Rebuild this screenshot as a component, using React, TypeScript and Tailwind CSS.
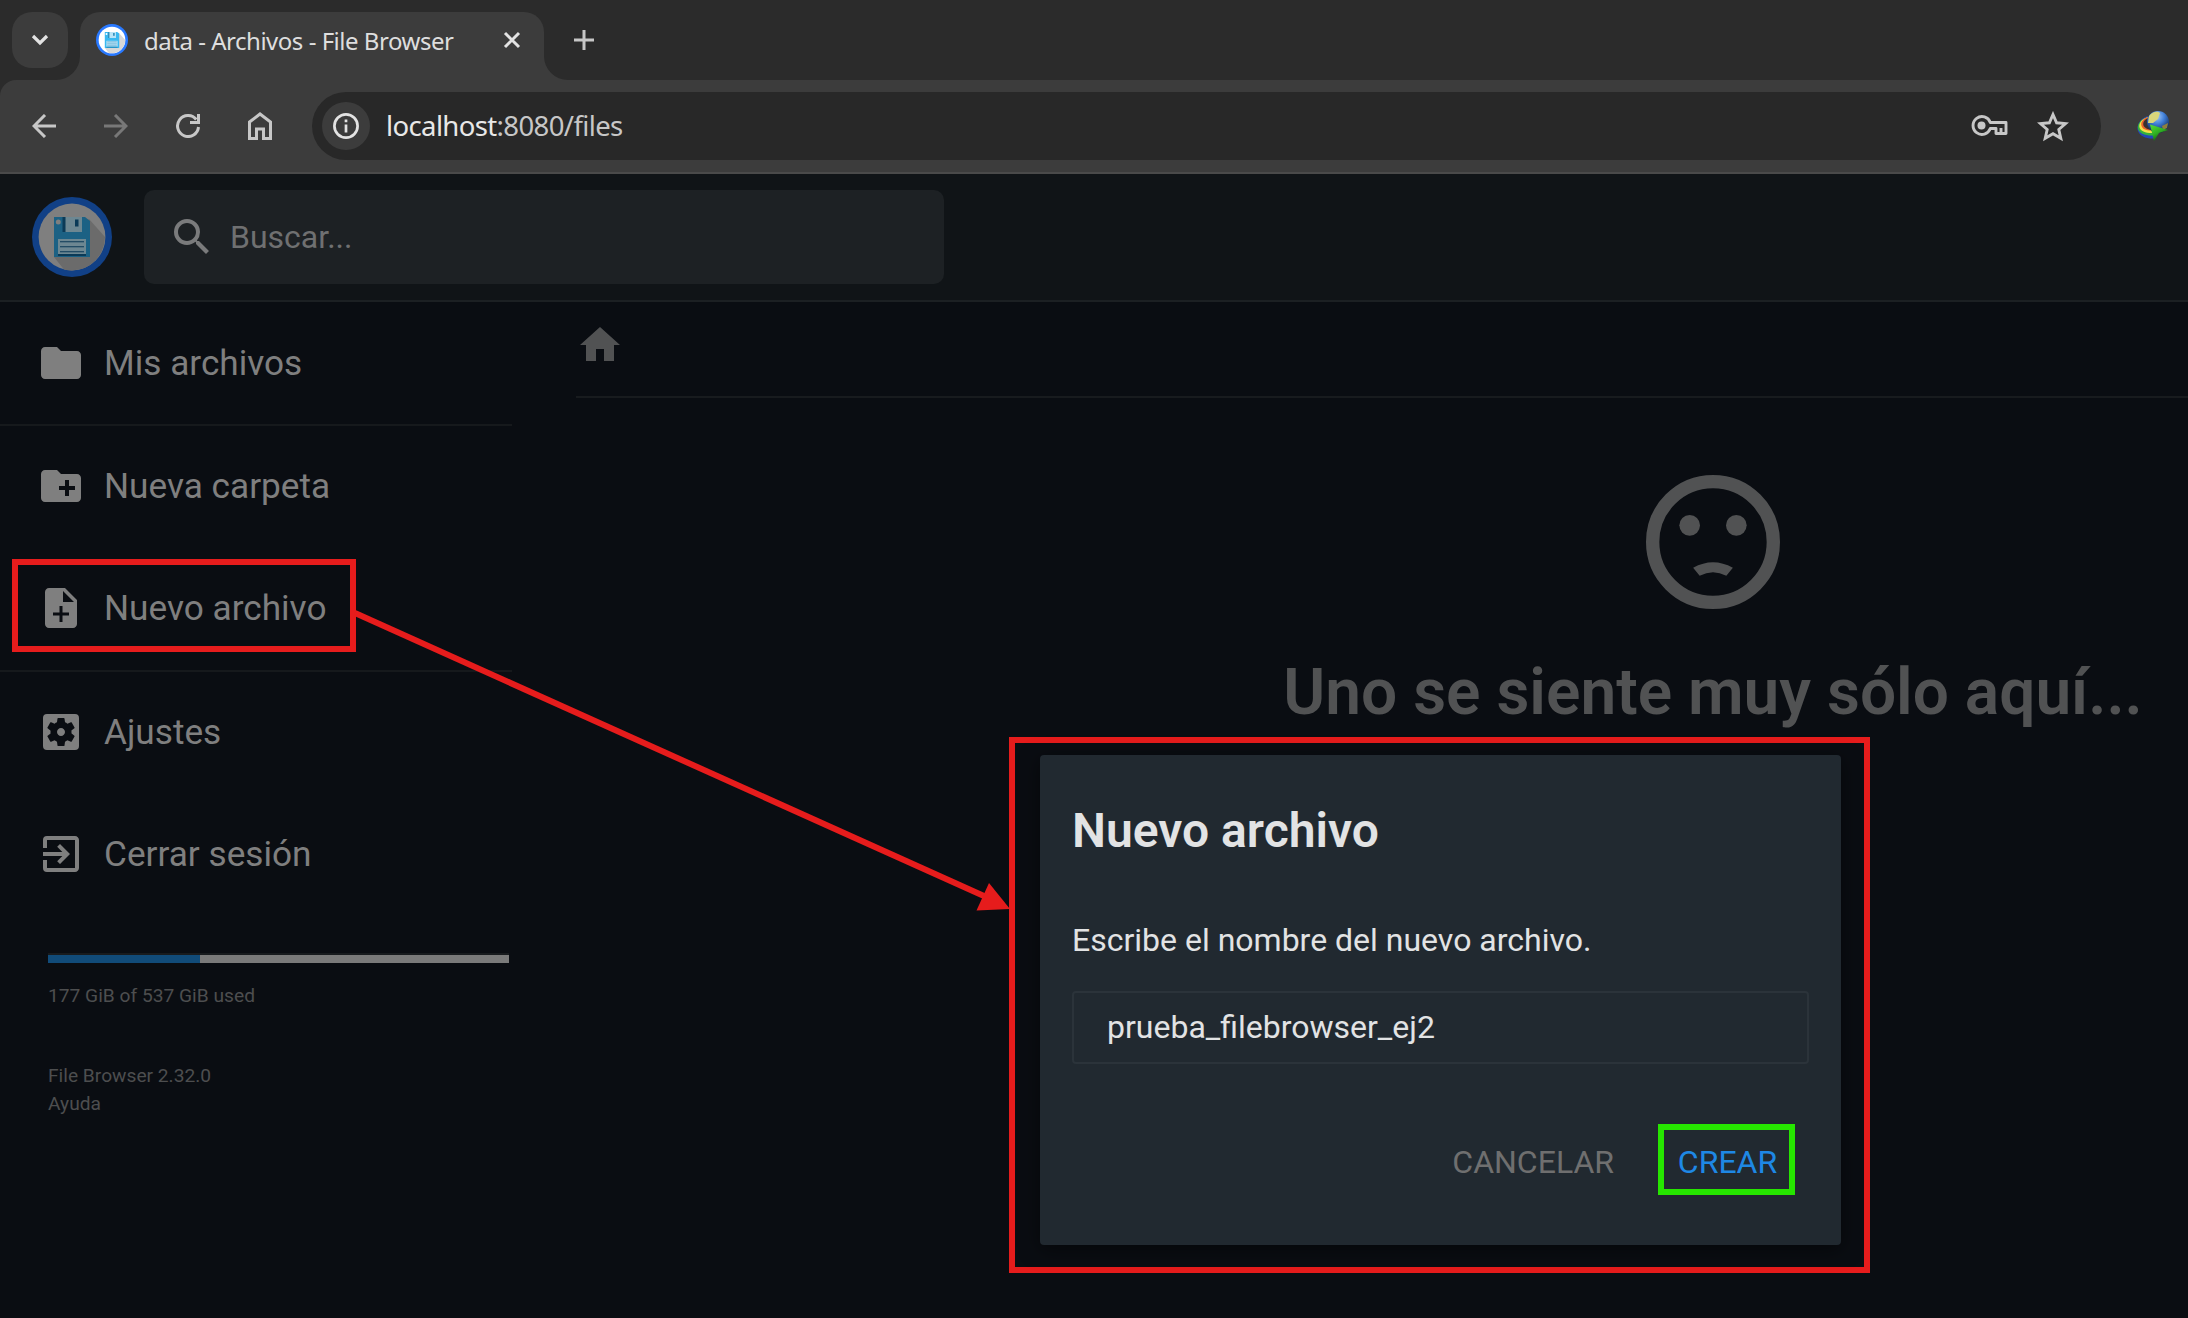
import React from "react";
import {
  MdFolder,
  MdCreateNewFolder,
  MdSettingsApplications,
  MdExitToApp,
  MdSearch,
  MdHome,
} from "react-icons/md";

function Floppy({ size, dim }: { size: number; dim?: boolean }) {
  const ring = dim ? "#114086" : "#2979ff";
  const face = dim ? "#7f7f7f" : "#ffffff";
  const shade = dim ? "#6b6b6b" : "#d8d8d8";
  const body = dim ? "#1c6184" : "#39b8f0";
  const label = dim ? "#6d8792" : "#b9e4f7";
  const dark = dim ? "#0b3a57" : "#1a7fb0";
  return (
    <svg width={size} height={size} viewBox="0 0 80 80" className="shrink-0">
      <circle cx="40" cy="40" r="40" fill={ring} />
      <circle cx="40" cy="40" r="33.4" fill={face} />
      <path d="M57 22 L73 40 A33.4 33.4 0 0 1 32 72.5 L22 60 Z" fill={shade} />
      <path d="M22 20H53L58 24V60H22Z" fill={body} />
      <rect x="31" y="20" width="19" height="15" fill={label} />
      <rect x="30.500" y="20" width="3" height="15" fill={dark} />
      <rect x="43" y="22.500" width="3.500" height="7" fill={dark} />
      <circle cx="26.300" cy="25" r="2.500" fill={face} />
      <rect x="26" y="42" width="28" height="15" fill={label} />
      <path d="M28 44.700H52M28 49.700H52M28 54.700H52" stroke={dark} strokeWidth="1.100" />
      <rect x="26" y="57" width="28" height="2" fill={dark} />
    </svg>
  );
}

function NavItem({ icon, label, className }: { icon: React.ReactNode; label: string; className?: string }) {
  return (
    <div className={`flex h-[122px] items-center pl-[37px] text-[35.2px] text-[#7f7f7f] ${className ?? ""}`}>
      <span className="mr-[19px] text-5xl">{icon}</span>
      <span className="pt-0.5 leading-none">{label}</span>
    </div>
  );
}

function BrowserChrome() {
  return (
    <div className="h-[174px] shrink-0 font-['Noto_Sans',sans-serif]">
      <div className="flex h-20 bg-[#2b2b2b] pt-3 pl-3">
        <div className="flex size-14 items-center justify-center rounded-[20px] bg-[#3c3c3c]">
          <svg width="20" height="16" viewBox="0 0 20 16" fill="none" stroke="#e3e3e3" strokeWidth="3.200">
            <path d="M3 4l7 7 7-7" />
          </svg>
        </div>
        <div className="relative ml-3 flex h-[68px] w-[464px] items-center rounded-t-[20px] bg-[#3c3c3c] pb-3 pl-4">
          <svg className="absolute bottom-0 -left-6" width="24" height="24" viewBox="0 0 24 24" fill="#3c3c3c">
            <path d="M24 0V24H0A24 24 0 0 0 24 0Z" />
          </svg>
          <svg className="absolute -right-6 bottom-0" width="24" height="24" viewBox="0 0 24 24" fill="#3c3c3c">
            <path d="M0 0V24H24A24 24 0 0 1 0 0Z" />
          </svg>
          <Floppy size={32} />
          <span className="ml-4 w-[320px] shrink-0 pt-0.5 text-[24px] tracking-[-0.48px] whitespace-nowrap text-[#dedede]">
            data - Archivos - File Browser
          </span>
          <svg className="ml-[39px] shrink-0" width="18" height="18" viewBox="0 0 18 18" stroke="#e3e3e3" strokeWidth="3">
            <path d="M2 2l14 14M16 2L2 16" />
          </svg>
        </div>
        <svg className="mt-[18px] ml-[30px]" width="20" height="20" viewBox="0 0 20 20" stroke="#c7c7c7" strokeWidth="3">
          <path d="M10 0V20M0 10H20" />
        </svg>
      </div>
      <div className="bg-[#2b2b2b]">
        <div className="flex h-[94px] items-center rounded-tl-2xl border-b-2 border-[#4a4a4a] bg-[#3c3c3c]">
          <svg className="ml-8" width="24" height="24" viewBox="0 0 24 24" fill="none" stroke="#c7c7c7" strokeWidth="3">
            <path d="M24 12H2.500M13 1L2 12l11 11" />
          </svg>
          <svg className="ml-12" width="24" height="24" viewBox="0 0 24 24" fill="none" stroke="#787878" strokeWidth="3">
            <path d="M0 12H21.500M11 1l11 11-11 11" />
          </svg>
          <svg className="ml-12" width="24" height="24" viewBox="0 0 24 24" fill="none" stroke="#c7c7c7" strokeWidth="3">
            <path d="M22.500 13A10.500 10.500 0 1 1 20.300 5.500M22.500 0V8.500H14" />
          </svg>
          <svg className="ml-12" width="24" height="28" viewBox="0 0 24 28" fill="none" stroke="#c7c7c7" strokeWidth="3">
            <path d="M1.500 10L12 2l10.500 8V26.500H15.500V17H8.500v9.500H1.500Z" />
          </svg>
          <div className="ml-10 flex h-[68px] w-[1789px] items-center rounded-full bg-[#282828]">
            <div className="ml-2.5 flex size-12 items-center justify-center rounded-full bg-[#3c3c3c]">
              <svg width="26" height="26" viewBox="0 0 26 26" fill="none" stroke="#e3e3e3" strokeWidth="2.700">
                <circle cx="13" cy="13" r="11.600" />
                <path d="M13 11.500V19.500M13 6.500V9.200" />
              </svg>
            </div>
            <div className="ml-4 text-[27.5px] tracking-[-0.62px] text-[#c7c7c7]">
              <span className="text-[#e8e8e8]">localhost</span>:8080/files
            </div>
            <svg className="ml-auto" width="37" height="22" viewBox="0 0 37 22" fill="none" stroke="#c7c7c7" strokeWidth="2.900">
              <path d="M19.300 7.500A8.900 8.900 0 1 0 19.300 13.500H25V18.500H35V7.500Z" strokeLinejoin="round" />
              <path d="M30 18V13" />
              <circle cx="10.500" cy="10.500" r="4" fill="#c7c7c7" stroke="none" />
            </svg>
            <svg className="mr-8 ml-[29px]" width="32" height="31" viewBox="0 0 32 31" fill="none" stroke="#c7c7c7" strokeWidth="2.900">
              <path d="M16 3.500L19.600 11.800 28.600 12.600 21.800 18.500 23.800 27.300 16 22.700 8.200 27.300 10.200 18.500 3.400 12.600 12.400 11.800Z" />
            </svg>
          </div>
          <svg className="ml-9" width="33" height="31" viewBox="0 0 33 31">
            <defs>
              <radialGradient id="globe" cx="0.45" cy="0.25" r="0.75">
                <stop offset="0" stopColor="#a9cdf5" />
                <stop offset="0.45" stopColor="#3f7fd9" />
                <stop offset="1" stopColor="#0d1f4a" />
              </radialGradient>
              <linearGradient id="arrow" x1="0" y1="0" x2="0.600" y2="1">
                <stop offset="0" stopColor="#55e03a" />
                <stop offset="0.550" stopColor="#2fae22" />
                <stop offset="1" stopColor="#07450c" />
              </linearGradient>
            </defs>
            <path d="M11 5C3 7-1 15 1 20S9 28 17 27.500L17 18C12 18 9 13 11 5Z" fill="#2446b8" />
            <path d="M11 6C3 8 0 14 1 18S8 25 17 24.500L17 18C12 18 9 13 11 6Z" fill="#35b13c" />
            <path d="M11 6C4 8 1.500 13 2.500 16.500S9 22.500 17 22L17 18C12 18 9 13 11 6Z" fill="#f4e04a" />
            <path d="M11 6C5 8 3.500 12 4.500 15S9 20 17 19.500L17 17C12 17 9 13 11 6Z" fill="#e9652b" />
            <path d="M12 7C7 8 5.500 12 6.500 14.500S11 19 17 19L17 13Z" fill="#3a3030" />
            <circle cx="21" cy="11" r="11" fill="url(#globe)" />
            <path d="M12 5C16 0 21 0 23 2L21 8 16 12 11 12Z" fill="#d9d67a" />
            <path d="M25 15L31 12 30 17 26 19Z" fill="#8f7f3c" />
            <path d="M13 13.500L31 19 22 22 17 30Z" fill="url(#arrow)" />
          </svg>
        </div>
      </div>
    </div>
  );
}

function Sidebar() {
  return (
    <nav className="w-[512px] shrink-0">
      <div className="border-b-2 border-[#16191c]">
        <NavItem icon={<MdFolder />} label="Mis archivos" />
      </div>
      <div className="border-b-2 border-[#16191c]">
        <NavItem className="pb-0.5" icon={<MdCreateNewFolder />} label="Nueva carpeta" />
        <NavItem
          className="pb-0.5"
          icon={
            <svg width="48" height="48" viewBox="0 0 24 24" fill="currentColor">
              <path d="M14 2H6c-1.100 0-1.990.9-1.990 2L4 20c0 1.100.89 2 1.990 2H18c1.100 0 2-.9 2-2V8l-6-6zm2 13.700h-3.250V19h-1.500v-3.300H8v-1.400h3.250V11h1.500v3.300H16zM13 9V3.500L18.500 9H13z" />
            </svg>
          }
          label="Nuevo archivo"
        />
      </div>
      <div>
        <NavItem className="pb-0.5" icon={<MdSettingsApplications />} label="Ajustes" />
        <NavItem className="pb-0.5" icon={<MdExitToApp />} label="Cerrar sesión" />
      </div>
      <div className="mt-[37px] ml-12 w-[461px] border-t-2 border-[#181b1e]">
        <div className="h-2 bg-[#7a7a7a]">
          <div className="h-2 w-[152px] bg-[#114b79]" />
        </div>
      </div>
      <div className="ml-12 text-[19.2px] leading-7 text-[#4d4e4f]">
        <div className="mt-[19px]">177 GiB of 537 GiB used</div>
        <div className="mt-[52px]">File Browser 2.32.0</div>
        <div>Ayuda</div>
      </div>
    </nav>
  );
}

function Prompt() {
  return (
    <div className="absolute top-[737px] left-[1009px] h-[536px] w-[861px] border-[6px] border-[#e61c1c] pt-3 pl-[25px]">
      <div className="flex h-[490px] w-[801px] flex-col rounded bg-[#212930] px-8 text-[#e2e3e4] shadow-[0_4px_20px_rgba(0,0,0,0.5)]">
        <h2 className="mt-12 text-5xl leading-[56px] font-semibold">Nuevo archivo</h2>
        <p className="mt-[61px] text-[32px] leading-10">Escribe el nombre del nuevo archivo.</p>
        <div className="mt-[31px] flex h-[73px] items-center rounded border-2 border-[#2b333a] pb-0.5 pl-[33px] text-[32px] leading-none">
          prueba_filebrowser_ej2
        </div>
        <div className="mt-[60px] mr-[14px] flex items-center justify-end text-[32px] leading-none">
          <span className="mr-11 pt-1 text-[#6f6f6f]">CANCELAR</span>
          <span className="flex h-[71px] w-[137px] items-center justify-center border-[6px] border-[#26e600] pt-1 pl-0.5 text-[#1e88e5]">
            CREAR
          </span>
        </div>
      </div>
    </div>
  );
}

export default function App() {
  return (
    <div className="relative flex h-[1318px] w-[2188px] flex-col overflow-hidden bg-[#0a0d12] font-[Roboto,sans-serif]">
      <BrowserChrome />
      <header className="flex h-32 shrink-0 items-center border-b-2 border-[#1c2023] bg-[#101417] pl-8">
        <Floppy size={80} dim />
        <div className="ml-8 flex h-[94px] w-[800px] items-center rounded-[10px] bg-[#1d2124] pl-6 text-[32px] text-[#6f7071]">
          <MdSearch className="text-5xl text-[#7a7b7c]" />
          <span className="ml-[14px] leading-none">Buscar...</span>
        </div>
      </header>
      <div className="flex">
        <Sidebar />
        <main className="ml-16 w-[2274px] shrink-0">
          <div className="h-24 border-b-2 border-[#181b1e] pt-[19px]">
            <MdHome className="text-5xl text-[#515253]" />
          </div>
          <div className="flex flex-col items-center pt-16 text-[#515253]">
            <svg width="160" height="160" viewBox="0 0 24 24" fill="currentColor">
              <circle cx="12" cy="12" r="9.050" fill="none" stroke="currentColor" strokeWidth="2" />
              <circle cx="8.500" cy="9.500" r="1.550" />
              <circle cx="15.500" cy="9.500" r="1.550" />
              <path d="M9.020 15.850Q12 14.200 14.980 15.850L14 17.050Q12 16 10 17.050Z" />
            </svg>
            <h2 className="mt-[34px] text-[64px] leading-[74px] font-semibold">Uno se siente muy sólo aquí...</h2>
          </div>
        </main>
      </div>

      <div className="absolute top-[559px] left-3 h-[93px] w-[344px] border-[6px] border-[#e61c1c]" />
      <svg className="absolute top-[600px] left-[350px]" width="660" height="320" viewBox="350 600 660 320">
        <path d="M355 613L984 896" stroke="#e61c1c" strokeWidth="6" />
        <path d="M1010 909L989 883L976.500 910.500Z" fill="#e61c1c" />
      </svg>
      <Prompt />
    </div>
  );
}
